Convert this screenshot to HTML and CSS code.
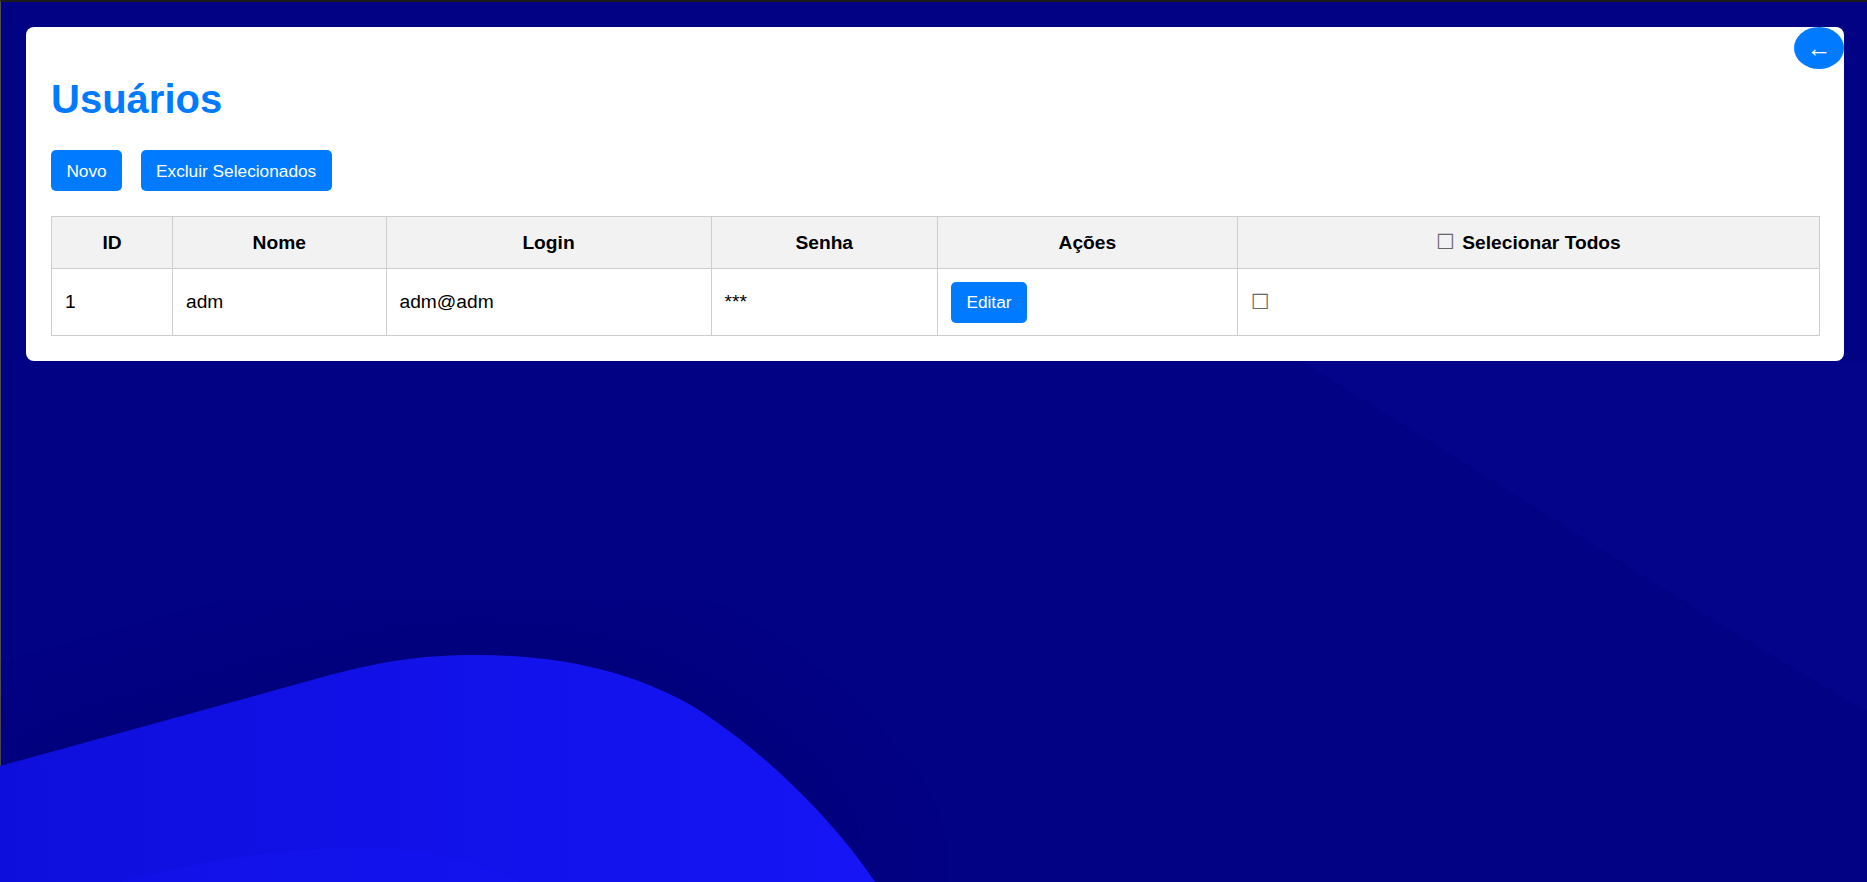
FILE: index.html
```html
<!DOCTYPE html>
<html lang="pt-BR">
<head>
<meta charset="utf-8">
<title>Usuários</title>
<link rel="stylesheet" href="styles.css">
</head>
<body>
<svg class="bg" viewBox="0 0 1867 882" preserveAspectRatio="none" aria-hidden="true">
  <defs>
    <linearGradient id="blobFill" x1="0" y1="0" x2="1" y2="0">
      <stop offset="0" stop-color="#0e0edc"/>
      <stop offset="1" stop-color="#1515f6"/>
    </linearGradient>
    <filter id="shade" x="-20%" y="-20%" width="140%" height="140%">
      <feGaussianBlur stdDeviation="45"/>
    </filter>
  </defs>
  <path d="M1300,361 C1480,470 1690,610 1867,712 L1867,361 Z" fill="#04048a"/>
  <path d="M0,760 L330,668 C390,651 430,648 476,648 C570,648 650,668 710,706 C780,752 840,820 878,882 L0,882 Z" fill="#00006a" opacity="0.45" filter="url(#shade)"/>
  <path d="M0,766 L330,675 C390,659 430,655 476,655 C565,655 642,674 702,712 C772,758 836,824 875,882 L0,882 Z" fill="url(#blobFill)"/>
  <path d="M120,882 C200,860 300,845 380,848 C440,851 480,862 520,882 Z" fill="#1818f8" opacity="0.3"/>
</svg>
<main class="page">
  <section class="card">
    <button class="back" type="button">←</button>
    <h1 class="title">Usuários</h1>
    <div class="actions">
      <button class="btn" type="button">Novo</button>
      <button class="btn" type="button">Excluir Selecionados</button>
    </div>
    <table class="users">
      <colgroup>
        <col class="c-id">
        <col class="c-nome">
        <col class="c-login">
        <col class="c-senha">
        <col class="c-acoes">
        <col class="c-sel">
      </colgroup>
      <thead>
        <tr>
          <th>ID</th>
          <th>Nome</th>
          <th>Login</th>
          <th>Senha</th>
          <th>Ações</th>
          <th><span class="box">☐</span> Selecionar Todos</th>
        </tr>
      </thead>
      <tbody>
        <tr>
          <td>1</td>
          <td>adm</td>
          <td>adm@adm</td>
          <td>***</td>
          <td><button class="btn" type="button">Editar</button></td>
          <td><span class="box">☐</span></td>
        </tr>
      </tbody>
    </table>
  </section>
</main>
</body>
</html>
```

FILE: styles.css
```css
* {
  box-sizing: border-box;
}

html {
  background: #020284;
}

body {
  margin: 0;
  min-height: 100vh;
  border-top: 2px solid #1c1c1c;
  border-left: 1px solid #4e4e4e;
  font-family: "Liberation Sans", Arial, sans-serif;
  color: #000;
  overflow: hidden;
}

.bg {
  position: fixed;
  left: 0;
  top: 0;
  width: 100%;
  height: 100%;
  z-index: 0;
}

.page {
  position: relative;
  z-index: 1;
  padding: 25px 23px 0 25px;
}

.card {
  position: relative;
  background: #fff;
  border-radius: 8px;
  padding: 25px;
}

.back {
  position: absolute;
  top: 0;
  right: 0;
  width: 50px;
  height: 42px;
  margin: 0;
  border: 0;
  padding: 0;
  line-height: 40px;
  font-family: "Liberation Sans", "DejaVu Sans", sans-serif;
  font-size: 25px;
  color: #fff;
  background: #007bff;
  border-radius: 50%;
}

.title {
  margin: 25px 0 29px;
  font-size: 40px;
  line-height: 44px;
  font-weight: bold;
  color: #007bff;
}

.actions {
  display: flex;
  gap: 18.5px;
  margin-bottom: 25.3px;
}

.btn {
  margin: 0;
  border: 0;
  padding: 10.6px 15.4px;
  font-family: "Liberation Sans", Arial, sans-serif;
  font-size: 17.28px;
  line-height: 20px;
  color: #fff;
  background: #007bff;
  border-radius: 5px;
}

.users {
  width: 100%;
  border-collapse: collapse;
  table-layout: fixed;
  font-size: 19.2px;
}

.c-id { width: 121px; }
.c-nome { width: 213.5px; }
.c-login { width: 325px; }
.c-senha { width: 226.5px; }
.c-acoes { width: 299.7px; }
.c-sel { width: 582.5px; }

.users th,
.users td {
  border: 1px solid #cdcdcd;
  line-height: 22px;
  vertical-align: middle;
}

.users th {
  background: #f2f2f2;
  font-weight: bold;
  text-align: center;
  padding: 14px 12.5px;
}

.users td {
  text-align: left;
  padding: 12.3px 12.5px 12.3px 13px;
}

.box {
  font-family: "DejaVu Sans", sans-serif;
  font-weight: normal;
  color: #666;
  font-size: 21px;
  margin-right: 2px;
}
```
